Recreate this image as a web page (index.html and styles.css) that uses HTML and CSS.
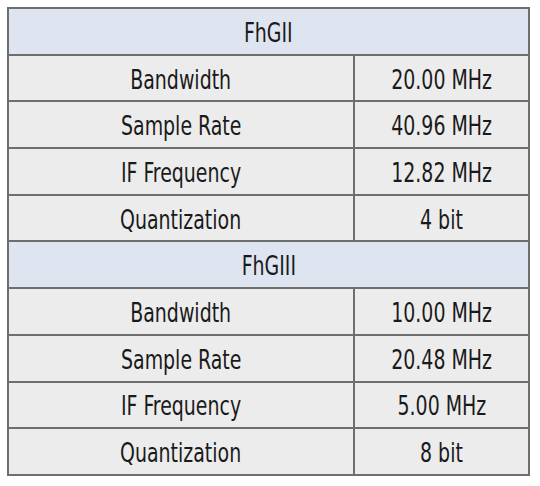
FILE: index.html
```html
<!DOCTYPE html>
<html>
<head>
<meta charset="utf-8">
<link rel="stylesheet" href="styles.css">
</head>
<body>
<table class="spec">
  <tr class="group"><th colspan="2"><span class="txt">FhGII</span></th></tr>
  <tr><td class="label"><span class="txt">Bandwidth</span></td><td class="value"><span class="txt">20.00 MHz</span></td></tr>
  <tr><td class="label"><span class="txt">Sample Rate</span></td><td class="value"><span class="txt">40.96 MHz</span></td></tr>
  <tr><td class="label"><span class="txt">IF Frequency</span></td><td class="value"><span class="txt">12.82 MHz</span></td></tr>
  <tr><td class="label"><span class="txt">Quantization</span></td><td class="value"><span class="txt">4 bit</span></td></tr>
  <tr class="group"><th colspan="2"><span class="txt">FhGIII</span></th></tr>
  <tr><td class="label"><span class="txt">Bandwidth</span></td><td class="value"><span class="txt">10.00 MHz</span></td></tr>
  <tr><td class="label"><span class="txt">Sample Rate</span></td><td class="value"><span class="txt">20.48 MHz</span></td></tr>
  <tr><td class="label"><span class="txt">IF Frequency</span></td><td class="value"><span class="txt">5.00 MHz</span></td></tr>
  <tr><td class="label"><span class="txt">Quantization</span></td><td class="value"><span class="txt">8 bit</span></td></tr>
</table>
</body>
</html>
```
FILE: styles.css
```css
html, body {
  margin: 0;
  padding: 0;
  background: #ffffff;
}
body {
  padding: 7px 0 0 7px;
}
.spec {
  border-collapse: collapse;
  width: 523px;
  font-family: "DejaVu Sans Condensed", "DejaVu Sans", sans-serif;
  font-stretch: condensed;
  font-size: 27px;
  color: #1a1a1a;
  border: 2px solid #7a7a7a;
}
.spec th, .spec td {
  height: 42.7px;
  padding: 2px 0 0 0;
  text-align: center;
  vertical-align: middle;
  font-weight: normal;
  border: 2px solid #6e6e6e;
  line-height: 1;
  white-space: nowrap;
}
.spec tr.group th {
  background: #dfe5f0;
}
.spec td {
  background: #ececec;
}
.spec td.label {
  width: 344px;
}
.txt {
  display: inline-block;
  transform: scaleX(0.78);
  transform-origin: center;
}
```
